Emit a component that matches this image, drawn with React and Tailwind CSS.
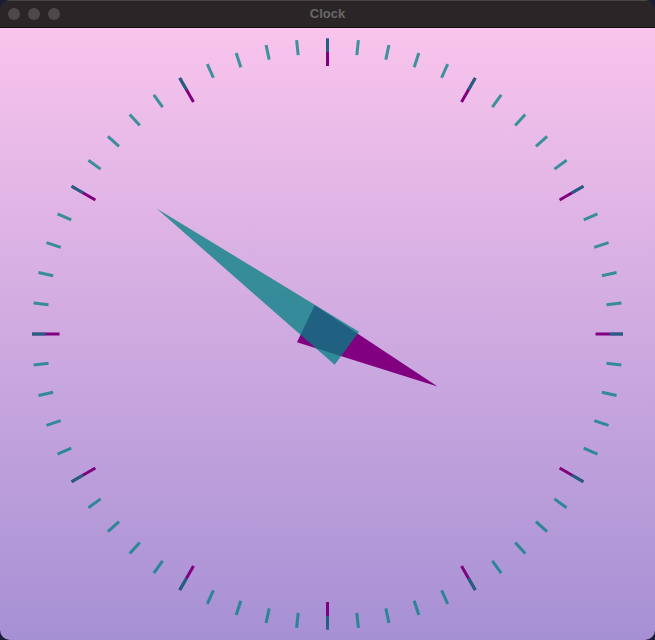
import React from 'react';

const CX = 327.5;
const CY = 306;

// tick marks: 60 around the face, every 5th is an hour mark
const ticks = Array.from({ length: 60 }, (_, i) => {
  const a = (i * 6 * Math.PI) / 180;
  const s = Math.sin(a);
  const c = -Math.cos(a);
  const pt = (r) => [CX + r * s, CY + r * c];
  return { i, hour: i % 5 === 0, pt };
});

function hand(deg, length, back = 24, half = 20.5) {
  const a = (deg * Math.PI) / 180;
  const ux = Math.sin(a);
  const uy = -Math.cos(a);
  const nx = -uy;
  const ny = ux;
  const tip = [CX + ux * length, CY + uy * length];
  const bx = CX - ux * back;
  const by = CY - uy * back;
  const p1 = [bx + nx * half, by + ny * half];
  const p2 = [bx - nx * half, by - ny * half];
  return [tip, p1, p2].map((p) => p.map((v) => v.toFixed(1)).join(',')).join(' ');
}

export default function App() {
  const hourDeg = 115.5;
  const minuteDeg = 306.3;

  return (
    <div className="w-[655px] h-[640px] bg-[#1b1c36]">
      <div className="flex flex-col w-full h-full rounded-[10px] overflow-hidden">
        {/* Title bar */}
        <div className="relative h-[28px] shrink-0 flex items-center bg-[#2a2628] border-t border-[#4a4648] border-b border-b-[#0e0c0d]">
          <div className="flex items-center gap-2 pl-2">
            <span className="w-3 h-3 rounded-full bg-[#4d494b]" />
            <span className="w-3 h-3 rounded-full bg-[#4d494b]" />
            <span className="w-3 h-3 rounded-full bg-[#4d494b]" />
          </div>
          <div className="absolute inset-0 flex items-center justify-center text-[13px] font-bold text-[#6b6769] font-['Liberation_Sans',Arial,sans-serif]">
            Clock
          </div>
        </div>

        {/* Clock face */}
        <div className="flex-1 bg-linear-to-b from-[#f9c4ec] to-[#a690d4]">
          <svg width="655" height="612" viewBox="0 0 655 612">
            {ticks.map(({ i, hour, pt }) => {
              if (hour) {
                const [x1, y1] = pt(268);
                const [x2, y2] = pt(295.5);
                const [x3, y3] = pt(282);
                return (
                  <g key={i}>
                    <line x1={x1} y1={y1} x2={x2} y2={y2} stroke="#800080" strokeWidth="3" />
                    <line x1={x3} y1={y3} x2={x2} y2={y2} stroke="teal" strokeOpacity="0.75" strokeWidth="3" />
                  </g>
                );
              }
              const [x1, y1] = pt(280.5);
              const [x2, y2] = pt(295.5);
              return (
                <line key={i} x1={x1} y1={y1} x2={x2} y2={y2} stroke="teal" strokeOpacity="0.75" strokeWidth="3" />
              );
            })}

            {/* hour hand */}
            <polygon points={hand(hourDeg, 122)} fill="#800080" />
            {/* minute hand */}
            <polygon points={hand(minuteDeg, 212)} fill="teal" fillOpacity="0.75" />
          </svg>
        </div>
      </div>
    </div>
  );
}
